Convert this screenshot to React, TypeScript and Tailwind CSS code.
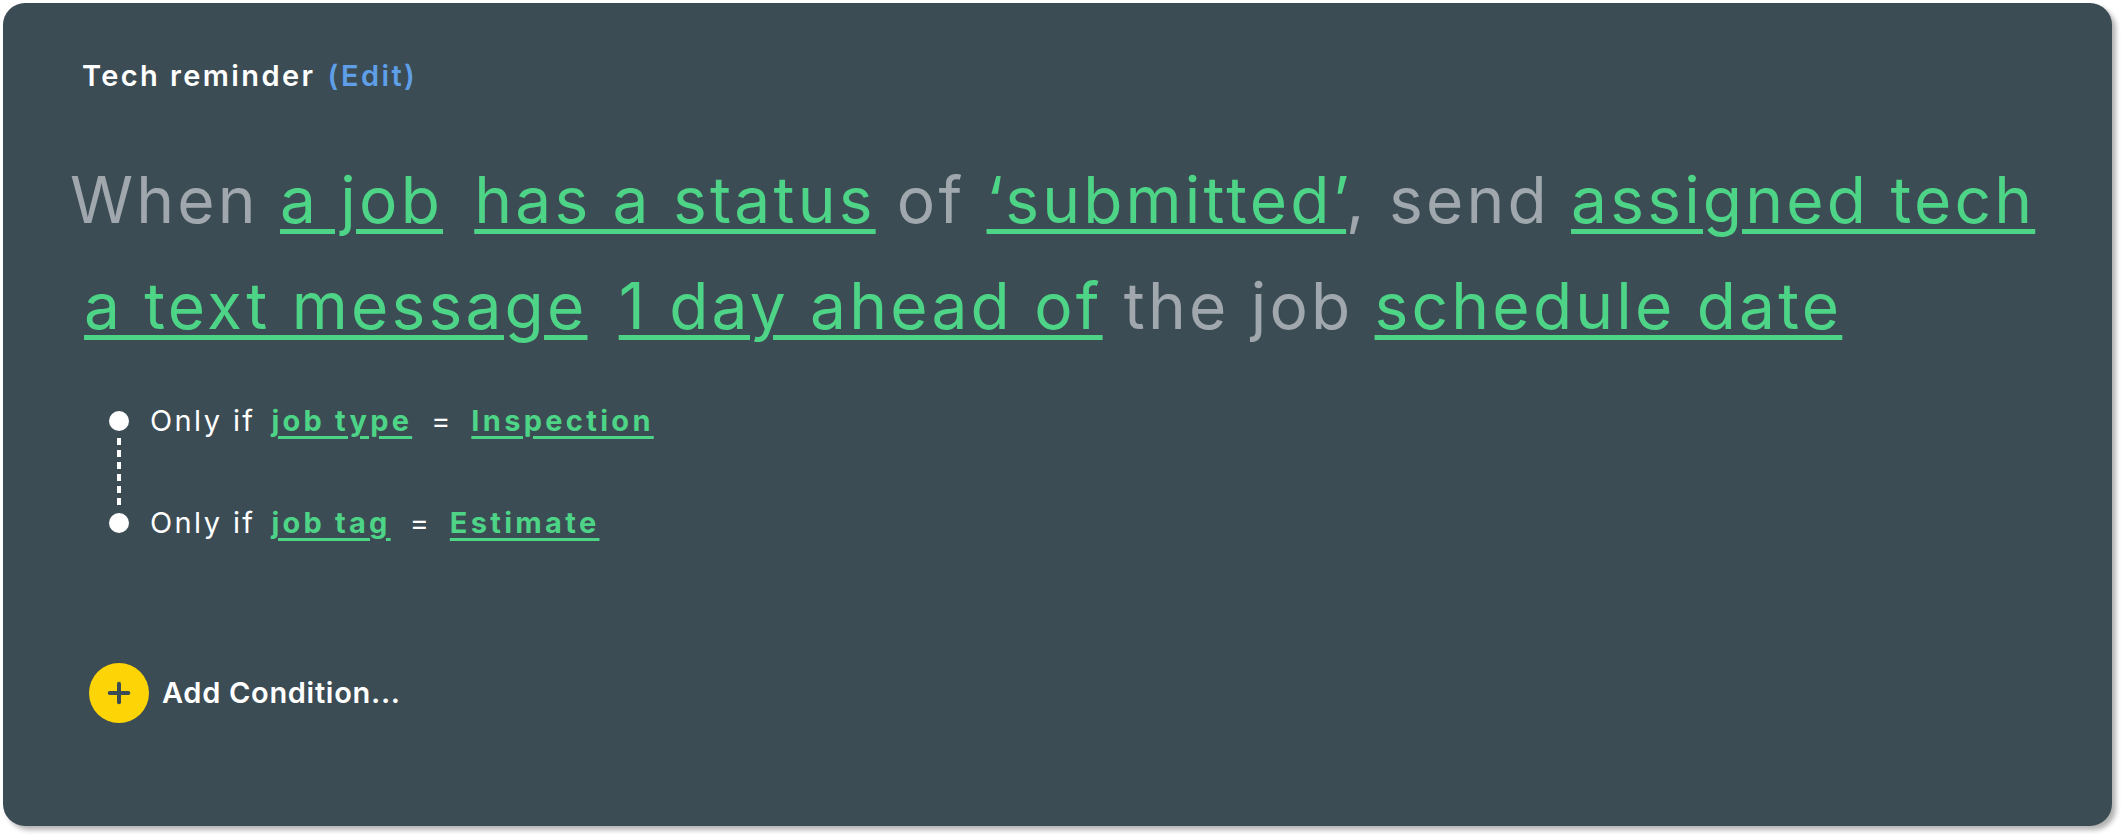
import { Plus } from 'lucide-react'

const font = { fontFamily: 'Inter, "Noto Sans", sans-serif' }

function Link({ children }: { children: React.ReactNode }) {
  return (
    <span className="text-[#4dd486] underline decoration-[5px] underline-offset-[6px]">{children}</span>
  )
}

// a wider gap between two linked phrases
function Gap() {
  return (
    <>
      {' '}
      <span className="inline-block w-[10px]" />
    </>
  )
}

function Condition({ field, value }: { field: string; value: string }) {
  return (
    <div className="flex items-center h-[34px]">
      <span className="w-5 h-5 rounded-full bg-white shrink-0" />
      <div className="ml-[21px] flex items-baseline text-[29px] text-white">
        <span className="tracking-[2.4px]">Only if</span>
        <span className="ml-[16px] font-bold tracking-[3.2px] text-[#4dd486] underline decoration-[3px] underline-offset-[5px]">
          {field}
        </span>
        <span className="ml-[19px]">=</span>
        <span className="ml-[21px] font-bold tracking-[3.3px] text-[#4dd486] underline decoration-[3px] underline-offset-[5px]">
          {value}
        </span>
      </div>
    </div>
  )
}

export default function App() {
  return (
    <div className="w-[2122px] h-[838px] bg-white pt-[3px] pl-[3px]" style={font}>
      <div className="w-[2109px] h-[823px] bg-[#3c4c54] rounded-[22px] shadow-[4px_4px_5px_rgba(0,0,0,0.3)] flex flex-col">
        <div className="ml-[79px] mt-[51px] flex items-baseline text-[29px] font-semibold tracking-[2.4px]">
          <span className="text-white">Tech reminder</span>
          <span className="ml-[12px] text-[#5e9fe8]">(Edit)</span>
        </div>

        <p className="ml-[67px] mt-[49px] text-[64px] leading-[106px] tracking-[3.2px] text-[#a0a7ad] whitespace-pre">
          When <Link>a job</Link>
          <Gap />
          <Link>has a status</Link> of <Link>‘submitted’</Link>, send <Link>assigned tech</Link>
          <br />
          <span className="inline-block w-[14px]" />
          <Link>a text message</Link>
          <Gap />
          <Link>1 day ahead of</Link> the job <Link>schedule date</Link>
        </p>

        <div className="ml-[106px] mt-[45px] flex flex-col">
          <Condition field="job type" value="Inspection" />
          <div className="ml-[8px] h-[68px] w-1 bg-[repeating-linear-gradient(to_bottom,white_0,white_7px,transparent_7px,transparent_12px)]" />
          <Condition field="job tag" value="Estimate" />
        </div>

        <button className="ml-[86px] mt-[123px] flex items-center gap-[13px] w-fit">
          <span className="w-[60px] h-[60px] rounded-full bg-[#fdd506] flex items-center justify-center">
            <Plus className="w-[32px] h-[32px] text-[#3c4c54]" strokeWidth={3} />
          </span>
          <span className="text-[29px] font-semibold tracking-[0.7px] text-white">Add Condition...</span>
        </button>
      </div>
    </div>
  )
}
